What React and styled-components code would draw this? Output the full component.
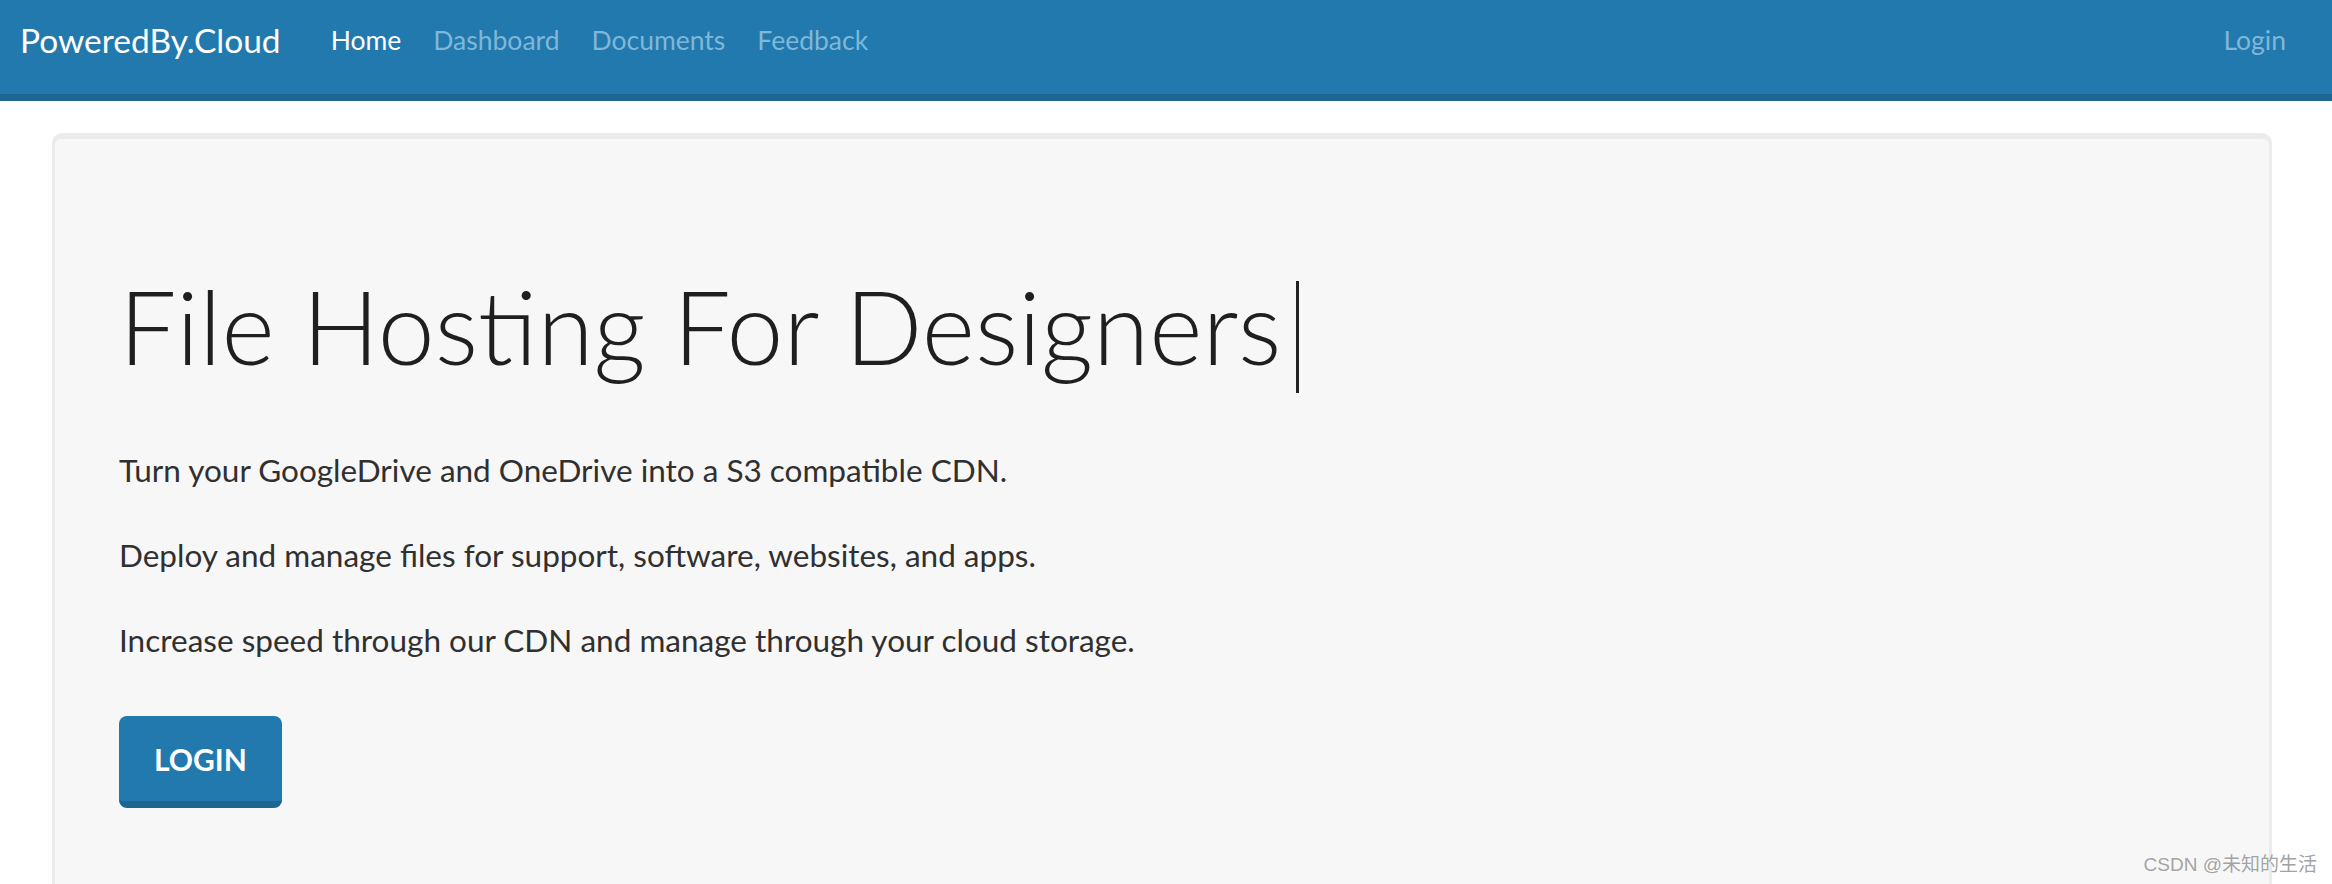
import React from "react";
import styled, { createGlobalStyle } from "styled-components";

const GlobalStyle = createGlobalStyle`
  html, body {
    margin: 0;
    padding: 0;
    overflow: hidden;
    background: #ffffff;
  }
  body {
    font-family: Lato, "Noto Sans", sans-serif;
    color: #333333;
  }
`;

const Page = styled.div`
  position: relative;
  height: 884px;
  overflow: hidden;
`;

const Navbar = styled.nav`
  box-sizing: border-box;
  height: 101px;
  display: flex;
  align-items: center;
  padding: 0 30px 14px 20px;
  background: #2279ad;
  border-bottom: 7px solid #1e6691;
`;

const Brand = styled.a`
  font-size: 33.5px;
  color: #ffffff;
  text-decoration: none;
  margin-right: 34px;
  white-space: nowrap;
`;

const NavList = styled.div`
  display: flex;
  align-items: center;
  flex: 1;
`;

const NavLink = styled.a`
  font-size: 26.5px;
  padding: 0 16px;
  text-decoration: none;
  white-space: nowrap;
  color: ${(p) => (p.$active ? "#ffffff" : "#7fb7d9")};
`;

const Container = styled.div`
  margin: 32px 60px 0 52px;
`;

const Jumbotron = styled.section`
  box-sizing: border-box;
  height: 820px;
  background: #f7f7f7;
  border: 3px solid #ebebeb;
  border-top-width: 6px;
  border-radius: 10px;
  padding: 126px 64px 0;
`;

const Title = styled.h1`
  margin: 0 0 58px;
  font-size: 102px;
  font-weight: 300;
  line-height: 1.2;
  color: #1f1f1f;
  white-space: nowrap;
`;

const Caret = styled.span`
  display: inline-block;
  width: 3px;
  height: 112px;
  margin-left: 15px;
  vertical-align: -28px;
  background: #222222;
`;

const Lead = styled.p`
  margin: 0 0 47px;
  font-size: 31.5px;
  line-height: 38px;
  color: #303030;
  white-space: nowrap;
`;

const LoginButton = styled.button`
  box-sizing: border-box;
  height: 92px;
  margin-top: 10px;
  padding: 0 35px;
  font-family: Lato, "Noto Sans", sans-serif;
  font-size: 30px;
  font-weight: 700;
  text-transform: uppercase;
  color: #ffffff;
  background: #2279ad;
  border: none;
  border-bottom: 7px solid #1e6590;
  border-radius: 8px;
  cursor: pointer;
`;

const Watermark = styled.span`
  position: absolute;
  right: 15px;
  bottom: 8px;
  font-family: "Liberation Sans", "Noto Sans CJK SC", sans-serif;
  font-size: 19px;
  color: #a3a3a3;
  text-shadow: 0 0 2px #ffffff;
`;

function App() {
  return (
    <Page>
      <GlobalStyle />
      <Navbar>
        <Brand href="/">PoweredBy.Cloud</Brand>
        <NavList>
          <NavLink href="/" $active>
            Home
          </NavLink>
          <NavLink href="/">Dashboard</NavLink>
          <NavLink href="/">Documents</NavLink>
          <NavLink href="/">Feedback</NavLink>
        </NavList>
        <NavLink href="/">Login</NavLink>
      </Navbar>
      <Container>
        <Jumbotron>
          <Title>
            File Hosting For Designers
            <Caret />
          </Title>
          <Lead>Turn your GoogleDrive and OneDrive into a S3 compatible CDN.</Lead>
          <Lead>Deploy and manage files for support, software, websites, and apps.</Lead>
          <Lead>Increase speed through our CDN and manage through your cloud storage.</Lead>
          <LoginButton>Login</LoginButton>
        </Jumbotron>
      </Container>
      <Watermark>CSDN @未知的生活</Watermark>
    </Page>
  );
}

export default App;
